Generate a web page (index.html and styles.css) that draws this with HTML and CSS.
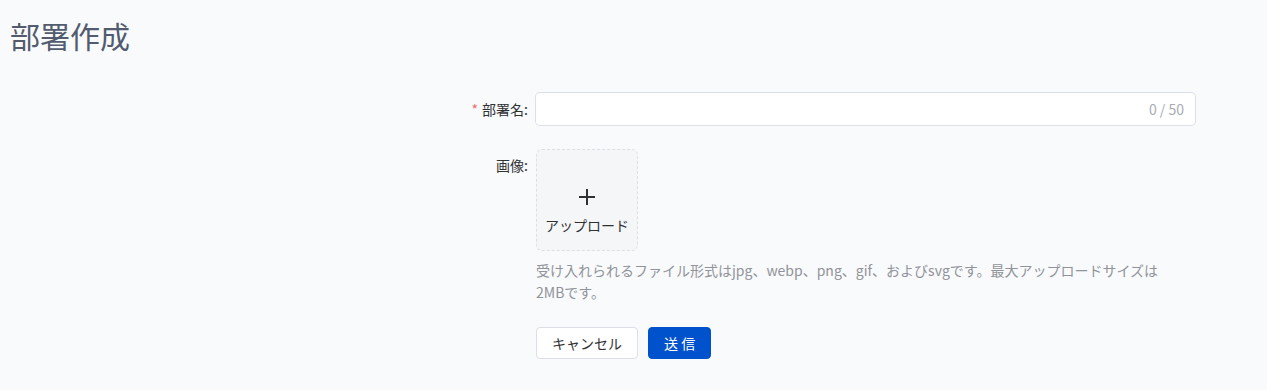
FILE: index.html
```html
<!DOCTYPE html>
<html lang="ja">
<head>
    <meta charset="utf-8">
    <title>部署作成</title>
    <link rel="stylesheet" href="styles.css">
</head>
<body>

<div class="page">
    <h1 class="page-title">部署作成</h1>

    <form class="dept-form">
        <div class="form-item">
            <label class="form-label"><span class="required">*</span>部署名:</label>
            <div class="form-content">
                <div class="input-wrap">
                    <input class="text-input" type="text" maxlength="50">
                    <span class="counter">0 / 50</span>
                </div>
            </div>
        </div>

        <div class="form-item">
            <label class="form-label">画像:</label>
            <div class="form-content">
                <div class="upload-card">
                    <span class="plus"></span>
                    <span class="upload-text">アップロード</span>
                </div>
                <div class="upload-tip">受け入れられるファイル形式はjpg、webp、png、gif、およびsvgです。最大アップロードサイズは<br>2MBです。</div>
            </div>
        </div>

        <div class="form-item">
            <div class="form-label"></div>
            <div class="form-content actions">
                <button type="button" class="btn">キャンセル</button>
                <button type="button" class="btn btn-primary">送&nbsp;信</button>
            </div>
        </div>
    </form>
</div>

</body>
</html>
```

FILE: styles.css
```css
html, body {
    margin: 0;
    padding: 0;
    background-color: #f9fafc;
    font-family: "Noto Sans CJK JP", "Noto Sans", sans-serif;
    color: #303133;
}

.page {
    padding: 14px 10px 20px;
}

.page-title {
    margin: 0;
    font-size: 30px;
    font-weight: 400;
    line-height: 42px;
    color: #525c6e;
}

.dept-form {
    margin-top: 37px;
    width: 1185px;
}

.form-item {
    display: flex;
    margin-bottom: 24px;
}

.form-label {
    flex: 0 0 526px;
    box-sizing: border-box;
    padding-right: 8px;
    text-align: right;
    font-size: 14px;
    line-height: 32px;
    color: #303133;
}

.required {
    color: #f56c6c;
    margin-right: 4px;
}

.form-content {
    flex: 1;
}

.input-wrap {
    display: flex;
    align-items: center;
    height: 32px;
    box-sizing: border-box;
    padding: 0 11px;
    background: #fff;
    border-radius: 4px;
    box-shadow: 0 0 0 1px #dcdfe6;
}

.text-input {
    flex: 1;
    border: 0;
    outline: none;
    background: transparent;
    font-size: 14px;
    font-family: inherit;
}

.counter {
    font-size: 14px;
    color: #a8abb2;
}

.upload-card {
    width: 102px;
    height: 102px;
    box-sizing: border-box;
    padding-top: 39px;
    border: 1px dashed #dcdfe6;
    border-radius: 6px;
    background: #f5f6f8;
    display: flex;
    flex-direction: column;
    align-items: center;
}

.plus {
    position: relative;
    width: 16px;
    height: 16px;
}

.plus::before,
.plus::after {
    content: "";
    position: absolute;
    background: #303133;
}

.plus::before {
    left: 7px;
    top: 0;
    width: 2px;
    height: 16px;
}

.plus::after {
    top: 7px;
    left: 0;
    width: 16px;
    height: 2px;
}

.upload-text {
    margin-top: 10px;
    font-size: 14px;
    line-height: 20px;
    color: #303133;
}

.upload-tip {
    margin-top: 8px;
    font-size: 14px;
    line-height: 22px;
    color: #909399;
}

.actions {
    display: flex;
    gap: 10px;
}

.btn {
    height: 32px;
    padding: 0 15px;
    border: 1px solid #dcdfe6;
    border-radius: 4px;
    background: #fff;
    color: #303133;
    font-size: 14px;
    font-family: inherit;
    cursor: pointer;
}

.btn-primary {
    background: #0052cc;
    border-color: #0052cc;
    color: #fff;
}
```
